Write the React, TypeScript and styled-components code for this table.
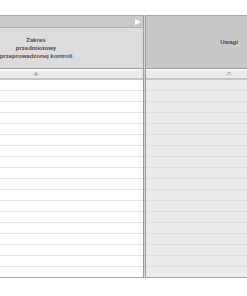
import React from "react";
import styled, { createGlobalStyle } from "styled-components";

const GlobalStyle = createGlobalStyle`
  html, body {
    margin: 0;
    padding: 0;
    background: #ffffff;
  }
  body {
    font-family: "Liberation Sans", Arial, sans-serif;
  }
`;

const Page = styled.div`
  width: 247px;
  height: 296px;
  overflow: hidden;
  padding-top: 15px;
  box-sizing: border-box;
`;

const Table = styled.div`
  display: flex;
  margin-left: -71px;
  width: 390px;
`;

const Column = styled.div<{ $width: number }>`
  width: ${(p) => p.$width}px;
  flex: none;
  display: flex;
  flex-direction: column;
`;

const Divider = styled.div`
  width: 1px;
  flex: none;
  background: #d6d6d8;
  border-left: 1px solid #9a9ca4;
  border-right: 1px solid #9a9ca4;
`;

const TopStrip = styled.div`
  height: 11px;
  background: #c9c9c9;
  border-top: 1px solid #a9a9a9;
  border-bottom: 1px solid #b0b0b0;
  display: flex;
  justify-content: flex-end;
  align-items: center;
  padding-right: 2px;
`;

const Arrow = styled.div`
  width: 0;
  height: 0;
  border-top: 3.5px solid transparent;
  border-bottom: 3.5px solid transparent;
  border-left: 6px solid #ffffff;
`;

const HeaderBox = styled.div<{ $bg: string; $height: number; $top?: boolean }>`
  height: ${(p) => p.$height}px;
  background: ${(p) => p.$bg};
  border-top: ${(p) => (p.$top ? "1px solid #a9a9a9" : "none")};
  border-bottom: 1px solid #9c9c9c;
  display: flex;
  align-items: center;
  justify-content: center;
  text-align: center;
  font-size: 6px;
  line-height: 8px;
  font-weight: bold;
  color: #4a4a4a;
`;

const NumBand = styled.div`
  height: 8px;
  background: #ececec;
  border-top: 1px solid #ffffff;
  border-bottom: 2px solid #c4c4c4;
  display: flex;
  align-items: center;
  justify-content: center;
  font-size: 5px;
  color: #777777;
`;

const Row = styled.div<{ $bg: string; $line: string; $last?: boolean }>`
  height: 10px;
  background: ${(p) => p.$bg};
  border-bottom: 1px solid ${(p) => (p.$last ? "#a4a6ac" : p.$line)};
`;

const ROWS = Array.from({ length: 18 }, (_, i) => i);

const App = () => {
  return (
    <Page>
      <GlobalStyle />
      <Table>
        <Column $width={214}>
          <TopStrip>
            <Arrow />
          </TopStrip>
          <HeaderBox $bg="#dcdcdd" $height={40}>
            Zakres
            <br />
            przedmiotowy
            <br />
            przeprowadzonej kontroli
          </HeaderBox>
          <NumBand>-6-</NumBand>
          {ROWS.map((i) => (
            <Row key={i} $bg="#ffffff" $line="#e4e4e4" $last={i === ROWS.length - 1} />
          ))}
        </Column>
        <Divider />
        <Column $width={166}>
          <HeaderBox $bg="#c8c8c9" $height={52} $top>
            Uwagi
          </HeaderBox>
          <NumBand>-7-</NumBand>
          {ROWS.map((i) => (
            <Row key={i} $bg="#ebebec" $line="#dedede" $last={i === ROWS.length - 1} />
          ))}
        </Column>
      </Table>
    </Page>
  );
};

export default App;
